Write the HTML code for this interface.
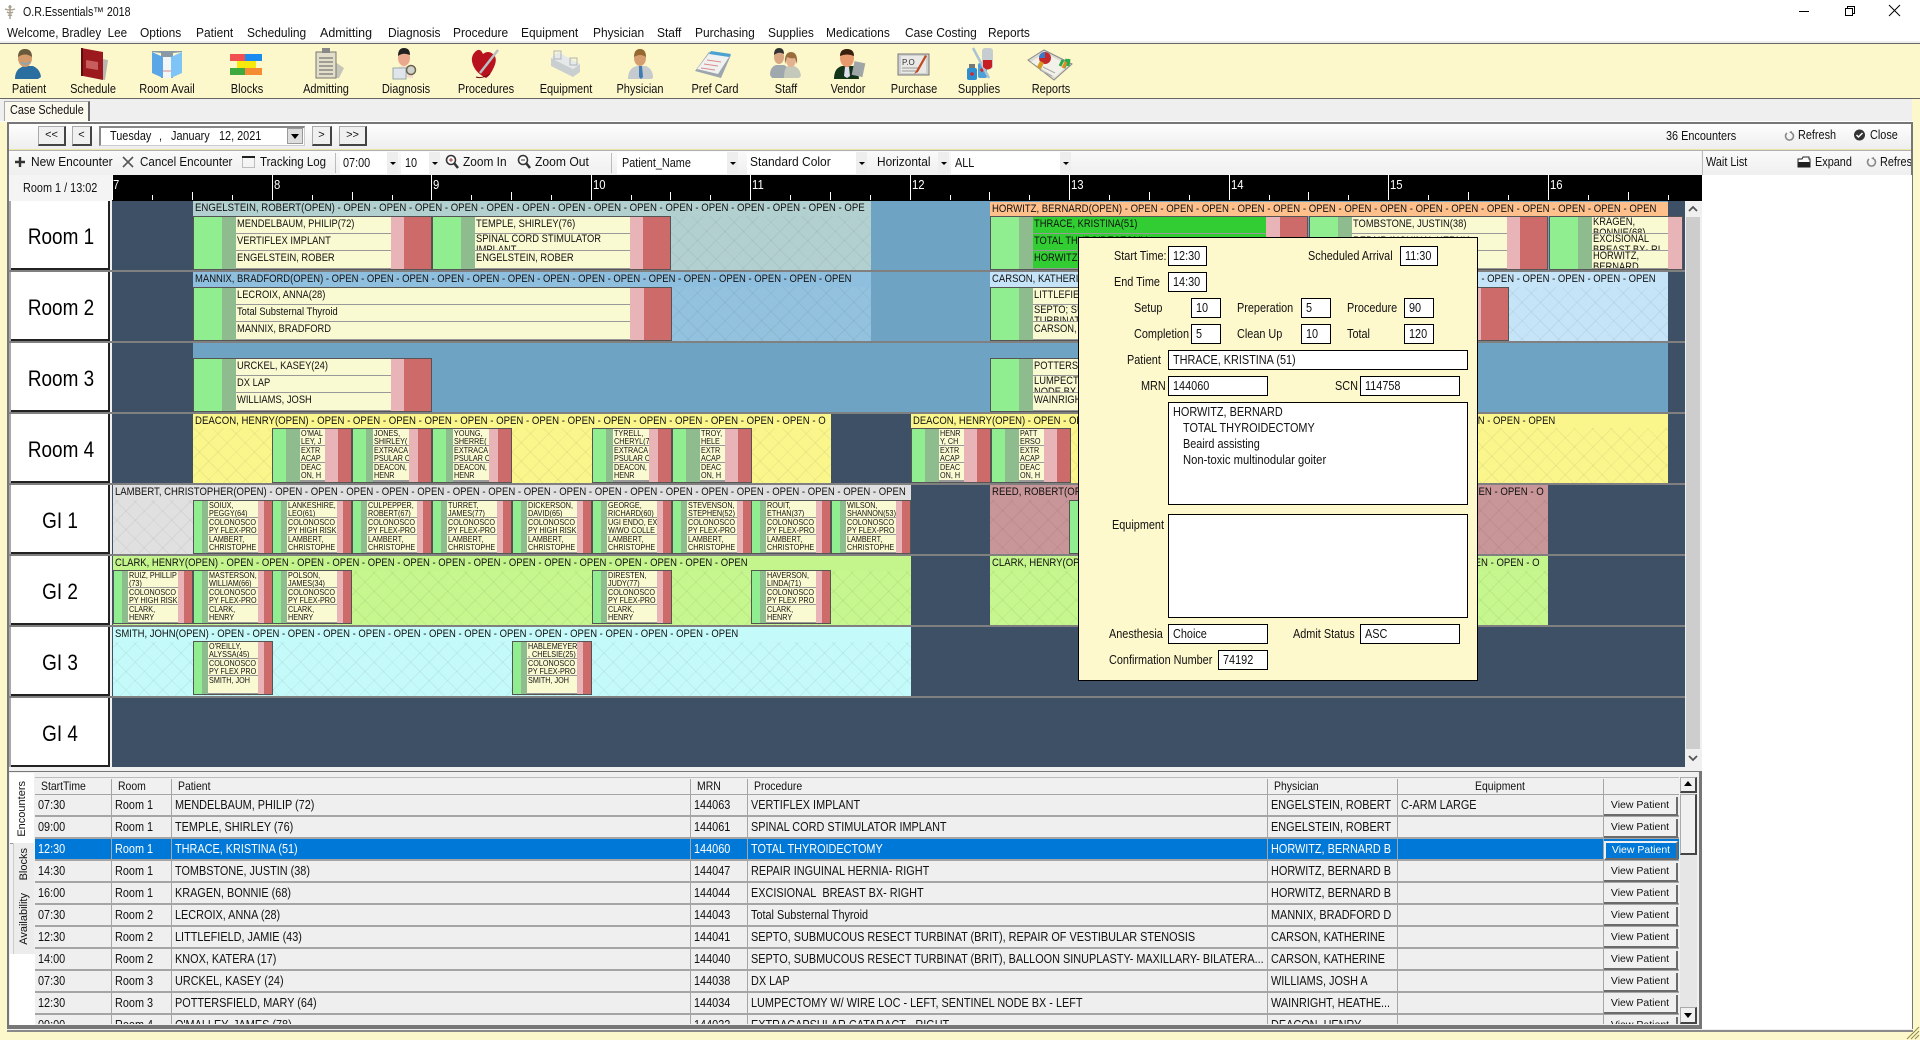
<!DOCTYPE html>
<html><head><meta charset="utf-8"><title>O.R.Essentials 2018</title>
<style>
html,body{margin:0;padding:0;width:1920px;height:1040px;overflow:hidden;background:#fdf7cc;font-family:"Liberation Sans",Arial,sans-serif;color:#111}
#w{position:relative;width:1920px;height:1040px;overflow:hidden}
#w div,#w span,svg{position:absolute}
.x{position:absolute;white-space:nowrap;transform:scaleX(.87);transform-origin:0 50%;font-size:12.5px;line-height:16px}
.m{top:25px;font-size:13px;transform:scaleX(.92)}
.lb{top:81px;transform:translateX(-50%) scaleX(.88);transform-origin:50% 50%}
.b1{background:#f0f0f0;border:1px solid #aaa;border-right:2px solid #444;border-bottom:2px solid #444;box-sizing:border-box;text-align:center;font-size:11px;line-height:17px}
.sel{background:#fff;box-sizing:border-box;height:22px;top:152px}
.ar{width:11px;background:#eee;height:22px;top:152px}
.ar:after{content:"";position:absolute;left:3px;top:10px;border:3px solid transparent;border-top:3px solid #000}
.rl{left:11px;width:97px;height:67px;background:#fff;border-right:2px solid #222;border-bottom:2px solid #222}
.rt{position:absolute;left:61px;white-space:nowrap;font-size:22px;line-height:26px;transform:translateX(-50%) scaleX(.86);transform-origin:50% 50%;color:#000}
.sp{left:8px;width:1677px;height:2px;background:#808080}
.h{height:15px;overflow:hidden}
.h .x{left:2px;top:-1px;font-size:11px;transform:scaleX(.86);line-height:16px}
.k{background-image:repeating-linear-gradient(45deg,rgba(0,0,0,.05) 0 1px,transparent 1px 13px),repeating-linear-gradient(-45deg,rgba(0,0,0,.05) 0 1px,transparent 1px 13px)}
.c{box-sizing:border-box;border:1px solid #555;height:54px;overflow:hidden}
.c p{position:absolute;margin:0;height:16px;background:#fafad2;overflow:hidden}
.c p:nth-child(1){top:0}.c p:nth-child(2){top:17px}.c p:nth-child(3){top:34px;height:17px}
.c i{position:absolute;left:1px;top:0;font-style:normal;white-space:nowrap;font-size:11px;line-height:14px;transform:scaleX(.85);transform-origin:0 0;color:#111}
.c i.t{line-height:11px}
.A{background:linear-gradient(90deg,#90ee90 28px,#8fbc8f 0 42px,#999 0 197px,#e8b4b8 0 210px,#cd6a6a 0);width:239px}
.A p{left:42px;width:155px}
.W{background:linear-gradient(90deg,#90ee90 28px,#8fbc8f 0 42px,#999 0 436px,#e8b4b8 0 450px,#cd6a6a 0);width:479px}
.W p{left:42px;width:394px}
.T{background:linear-gradient(90deg,#90ee90 28px,#8fbc8f 0 42px,#999 0 275px,#e8b4b8 0 289px,#cd6a6a 0);width:318px}
.T p{left:42px;width:233px;background:#32cd32}
.K{background:linear-gradient(90deg,#90ee90 28px,#8fbc8f 0 42px,#999 0 118px,#e8b4b8 0);width:134px}
.K p{left:42px;width:76px}
.O{background:linear-gradient(90deg,#90ee90 13px,#8fbc8f 0 27px,#999 0 52px,#e8b4b8 0 65px,#cd6a6a 0);width:80px}
.O p{left:27px;width:25px}
.J{background:linear-gradient(90deg,#90ee90 13px,#8fbc8f 0 20px,#999 0 56px,#e8b4b8 0 65px,#cd6a6a 0);width:80px}
.J p{left:20px;width:36px}
.G{background:linear-gradient(90deg,#90ee90 8px,#8fbc8f 0 14px,#999 0 64px,#e8b4b8 0 70px,#cd6a6a 0);width:80px}
.G p{left:14px;width:50px}
.O i,.J i,.G i{font-size:8.5px;line-height:8px;left:1px;top:0;transform:scaleX(.85)}
.f{background:#fff;border:1px solid #000;box-sizing:border-box;height:20px}
.f .x,.dt{left:4px;top:1px;font-size:12.5px}
.gr{left:35px;width:1644px;height:20px;border-bottom:2px solid #a5a5a5;background:#efefef}
.gr .x{top:2px}
.c1{left:3px}.c2{left:80px}.c3{left:140px}.c4{left:659px}.c5{left:716px}.c6{left:1236px}.c7{left:1366px}
.vp{left:1569px;top:2px;width:74px;height:19px;background:#f0f0f0;border-bottom:2px solid #6b6b6b;border-right:2px solid #6b6b6b;box-sizing:border-box;text-align:center;font-size:10.5px;line-height:17px;color:#111}
.on{background:#0078d7}
.on .x{color:#fff}
.on .vp{background:#0078d7;color:#fff;border:2px solid #f0f0f0;border-bottom:2px solid #6b6b6b;border-right:2px solid #6b6b6b;line-height:14px}
.vl{top:779px;width:1px;height:245px;background:#a5a5a5}
.vt{writing-mode:vertical-rl;transform:rotate(180deg);font-size:11px;white-space:nowrap;line-height:14px;text-align:center}
</style></head><body><div id="w">

<!-- title & menu -->
<div style="left:0;top:0;width:1920px;height:43px;background:#fff"></div>
<svg style="left:3px;top:4px" width="14" height="16" viewBox="0 0 14 16"><path d="M7 1v14M2 5q5 2 10 0M4 8q3 2 6 0M5 11q2 1 4 0" stroke="#a89f8c" stroke-width="1.4" fill="none"/><circle cx="7" cy="3" r="1.6" fill="#a89f8c"/></svg>
<span class="x" style="left:23px;top:4px;font-size:12.5px;transform:scaleX(.85)">O.R.Essentials™ 2018</span>
<svg style="left:1795px;top:3px" width="115" height="16" viewBox="0 0 115 16"><path d="M4 8.5h10" stroke="#000" stroke-width="1"/><path d="M50.500 5.500h7v7h-7zM52.500 5.500v-2h7v7h-2" stroke="#000" fill="none"/><path d="M94 2l11 11M105 2l-11 11" stroke="#000" fill="none"/></svg>
<span class="x m" style="left:7px;transform:scaleX(.895)">Welcome, Bradley&nbsp; Lee</span>
<span class="x m" style="left:140px">Options</span>
<span class="x m" style="left:196px">Patient</span>
<span class="x m" style="left:247px">Scheduling</span>
<span class="x m" style="left:320px;transform:scaleX(.96)">Admitting</span>
<span class="x m" style="left:388px">Diagnosis</span>
<span class="x m" style="left:453px">Procedure</span>
<span class="x m" style="left:521px">Equipment</span>
<span class="x m" style="left:593px">Physician</span>
<span class="x m" style="left:657px">Staff</span>
<span class="x m" style="left:695px">Purchasing</span>
<span class="x m" style="left:768px">Supplies</span>
<span class="x m" style="left:826px">Medications</span>
<span class="x m" style="left:905px">Case Costing</span>
<span class="x m" style="left:988px">Reports</span>

<!-- toolbar -->
<div style="left:0;top:41px;width:1920px;height:2px;background:#efefef"></div>
<div style="left:0;top:43px;width:1920px;height:56px;background:#fdf7cc;border-top:1px solid #666;border-bottom:1px solid #666;box-sizing:border-box"></div>
<svg style="left:0;top:44px" width="1100" height="40" viewBox="0 44 1100 40">
<!-- patient -->
<path d="M15 79q0-11 10-13l8 0q7 3 8 11l-3 2z" fill="#2a6f9f"/><ellipse cx="25" cy="58" rx="7" ry="9" fill="#d39a6c"/><path d="M18 57q0-8 7-8t7 8q-7-5-14 0z" fill="#6a5a3c"/><path d="M21 62q4 4 9 0" stroke="#7fa9bf" stroke-width="1.500" fill="none"/>
<!-- schedule -->
<path d="M98 58l10 2-3 20-9-2z" fill="#b8b8b0"/><path d="M81 48l22 4v28l-20-4z" fill="#9c1a1e"/><path d="M83 48l-2 0v28l2 0z" fill="#5b0d10"/><path d="M86 60l12 2v8l-12-2z" fill="#c85d5d"/>
<!-- room avail -->
<path d="M152 51h30v1l-9 1v25h-12v-25l-9-1z" fill="#8a99a6"/><path d="M152 52l11 5v21l-11-5z" fill="#5aa6e6"/><path d="M182 52l-11 5v21l11-5z" fill="#7fc4f7"/><path d="M163 57h8v21h-8z" fill="#f3f6f6"/><path d="M163 71h8" stroke="#d88" stroke-width="1"/>
<!-- blocks -->
<rect x="230" y="54" width="15" height="7" fill="#f25050"/><rect x="245" y="54" width="17" height="7" fill="#1b8bf0"/><rect x="237" y="61" width="19" height="7" fill="#f5e90e"/><rect x="230" y="68" width="15" height="7" fill="#3ea93e"/><rect x="245" y="68" width="17" height="7" fill="#f58b32"/>
<!-- admitting -->
<path d="M335 62l9 6-5 10h-5z" fill="#c5c5b8"/><rect x="316" y="52" width="20" height="26" fill="#e3decb" stroke="#77776d"/><rect x="322" y="48" width="8" height="5" fill="#888"/><path d="M319 58h14M319 62h14M319 66h14M319 70h14M319 74h14" stroke="#333" stroke-width=".8"/>
<!-- diagnosis -->
<ellipse cx="404" cy="58" rx="6" ry="8" fill="#eaa98c"/><path d="M398 56q0-8 6-8t6 7q-7-3-12 1z" fill="#222"/><path d="M396 77v-8q3-3 8-3t9 3v9z" fill="#f4ddd0"/><rect x="393" y="68" width="13" height="11" fill="#dfe5ea" stroke="#9aa"/><circle cx="411" cy="70" r="4.500" fill="#cfd3c9" stroke="#6b6350" stroke-width="1.500"/>
<!-- procedures -->
<path d="M486 78q-10-5-13-13t2-13 8 2q5-4 10 0t1 13-8 11z" fill="#b8121e"/><path d="M498 50l-18 23" stroke="#b9bfc4" stroke-width="2.500"/><path d="M476 77q6 2 14-3" stroke="#6e0a12" fill="none"/>
<!-- equipment -->
<path d="M551 58l22 11 7-5v8l-7 5-22-11z" fill="#c9ced0"/><path d="M551 58l7-6 22 12-7 5z" fill="#e6e9ea"/><path d="M554 51h7v8h-7zM570 58h7v7h-7z" fill="none" stroke="#aeb4b6"/>
<!-- physician -->
<path d="M628 79q0-11 9-13h9q7 3 7 12l-2 1z" fill="#c4cace"/><ellipse cx="640" cy="58" rx="6" ry="8" fill="#d69e6e"/><path d="M634 57q0-8 6-8t6 8q-6-4-12 0z" fill="#94682e"/><path d="M639 66h3l1 11-2 2-2-2z" fill="#3e7bb0"/>
<!-- pref card -->
<path d="M695 71l14-19 22 3-10 23z" fill="#9da6ad"/><path d="M697 69l14-18 20 3-13 20z" fill="#f0f2f2"/><path d="M711 51l20 3-2 3-20-3z" fill="#4da1d1"/><path d="M707 60l14 2M704 64l14 2M701 68l14 2" stroke="#d88" stroke-width="1"/>
<!-- staff -->
<path d="M770 75q0-8 6-10h8q5 2 5 10l-2 3h-15z" fill="#9fa8ad"/><ellipse cx="779" cy="57" rx="5" ry="7" fill="#d9a882"/><path d="M774 55q0-7 5-7t5 6q-5-3-10 1z" fill="#333"/><path d="M784 78q0-10 4-12h6q6 2 7 10l-2 2z" fill="#c5c9bb"/><ellipse cx="791" cy="60" rx="5" ry="7" fill="#e3b28f"/><path d="M785 64q-1-12 6-12t6 12l-2-6q-4 1-8-1z" fill="#9a6d3d"/>
<!-- vendor -->
<path d="M834 79q0-11 8-13h11q5 2 6 13z" fill="#123418"/><ellipse cx="847" cy="58" rx="7" ry="9" fill="#e89a6f"/><path d="M840 56q0-7 7-7t7 7q-7-3-14 0z" fill="#3a1e0e"/><path d="M845 67h4l1 9-3 2-3-2z" fill="#dde"/><rect x="853" y="62" width="11" height="14" fill="#a0a6a8" transform="rotate(12 858 69)"/>
<!-- purchase -->
<rect x="898" y="54" width="31" height="21" fill="#cfd1cf" stroke="#777"/><rect x="901" y="56" width="25" height="17" fill="#e9eae8"/><text x="902" y="65" font-size="8" font-family="Liberation Sans" fill="#333">P.O</text><path d="M902 68h16M902 71h16" stroke="#999"/><path d="M925 55l-9 16-2 3 4-2 9-16z" fill="#c24a22"/>
<!-- supplies -->
<rect x="967" y="68" width="10" height="12" rx="2" fill="#2c8fd0"/><rect x="969" y="64" width="6" height="4" fill="#777"/><rect x="978" y="63" width="9" height="15" rx="2" fill="#50a0d8"/><path d="M970 74h4M972 72v4M980 70h4M982 68v4" stroke="#d22" stroke-width="1.500"/><path d="M973 48l16 30" stroke="#a8c4d4" stroke-width="2.500"/><rect x="982" y="48" width="11" height="21" rx="3" fill="#c6cdd0"/><path d="M983 60h9v7q-4 5-9 0z" fill="#c61e24"/>
<!-- reports -->
<path d="M1028 60l16-10 28 14-18 16z" fill="#dcdcd2" stroke="#888"/><path d="M1031 62l14-9 23 12-13 12z" fill="#f2f2ea"/><circle cx="1045" cy="58" r="6" fill="#c42828"/><path d="M1045 58v-6a6 6 0 0 0-6 6z" fill="#3c78c8"/><path d="M1037 67l3-6 4 2-3 6z" fill="#d89a20"/><path d="M1060 66l3-6M1064 68l3-9M1068 66l1-7" stroke-width="3" stroke="#2aa84a" fill="none"/><path d="M1063 68l3-6" stroke="#e88a20" stroke-width="3"/><path d="M1040 70l12 6M1043 67l12 6" stroke="#aaa"/>
</svg>
<span class="x lb" style="left:29px">Patient</span>
<span class="x lb" style="left:93px">Schedule</span>
<span class="x lb" style="left:167px">Room Avail</span>
<span class="x lb" style="left:247px">Blocks</span>
<span class="x lb" style="left:326px">Admitting</span>
<span class="x lb" style="left:406px">Diagnosis</span>
<span class="x lb" style="left:486px">Procedures</span>
<span class="x lb" style="left:566px">Equipment</span>
<span class="x lb" style="left:640px">Physician</span>
<span class="x lb" style="left:715px">Pref Card</span>
<span class="x lb" style="left:786px">Staff</span>
<span class="x lb" style="left:848px">Vendor</span>
<span class="x lb" style="left:914px">Purchase</span>
<span class="x lb" style="left:979px">Supplies</span>
<span class="x lb" style="left:1051px">Reports</span>

<!-- tab strip -->
<div style="left:0;top:99px;width:1912px;height:22px;background:#efefef"></div>
<div style="left:4px;top:101px;width:86px;height:20px;background:#fbf9ee;border:1px solid #aaa;border-right:2px solid #666;border-bottom:0;box-sizing:border-box"></div>
<span class="x" style="left:10px;top:102px">Case Schedule</span>
<div style="left:0;top:121px;width:1913px;height:1px;background:#fff"></div>

<!-- main panel -->
<div style="left:7px;top:122px;width:1906px;height:910px;background:#f0f0f0;border:2px solid #777;border-bottom:1px solid #777;box-sizing:border-box"></div>
<div style="left:9px;top:124px;width:1902px;height:25px;background:linear-gradient(#fefefe,#eeeeee)"></div>
<div style="left:9px;top:149px;width:1902px;height:1px;background:#ece5a8"></div>
<div style="left:9px;top:150px;width:1902px;height:1px;background:#b0b0b0"></div>
<div style="left:9px;top:151px;width:1692px;height:24px;background:linear-gradient(#fafafa,#efefef)"></div>
<div class="b1" style="left:38px;top:126px;width:28px;height:20px">&lt;&lt;</div>
<div class="b1" style="left:72px;top:126px;width:20px;height:20px">&lt;</div>
<div style="left:99px;top:126px;width:206px;height:20px;background:#fff;border:2px solid #888;border-right:1px solid #ccc;border-bottom:1px solid #ccc;box-sizing:border-box"></div>
<span class="x" style="left:110px;top:128px">Tuesday</span><span class="x" style="left:159px;top:128px">,</span><span class="x" style="left:171px;top:128px">January</span><span class="x" style="left:219px;top:128px">12, 2021</span>
<div style="left:287px;top:128px;width:16px;height:16px;background:#ddd;border:1px solid #999;box-sizing:border-box"></div>
<div style="left:291px;top:134px;border:4px solid transparent;border-top:5px solid #000;width:0;height:0"></div>
<div class="b1" style="left:312px;top:126px;width:20px;height:20px">&gt;</div>
<div class="b1" style="left:339px;top:126px;width:28px;height:20px">&gt;&gt;</div>
<span class="x" style="left:1666px;top:128px">36 Encounters</span>
<svg style="left:1783px;top:129px" width="12" height="14" viewBox="0 0 12 14"><path d="M9 4a4 4 0 1 1-5 0" stroke="#888" stroke-width="1.600" fill="none"/><path d="M6 3l3-1v3z" fill="#888"/></svg>
<span class="x" style="left:1798px;top:127px">Refresh</span>
<svg style="left:1853px;top:128px" width="13" height="14" viewBox="0 0 13 14"><circle cx="6.500" cy="7" r="5.500" fill="#333"/><path d="M3.500 7l2 2 4-4" stroke="#fff" stroke-width="1.500" fill="none"/></svg>
<span class="x" style="left:1870px;top:127px">Close</span>

<!-- toolbar row 2 -->
<svg style="left:14px;top:155px" width="12" height="14" viewBox="0 0 12 14"><path d="M6 2v10M1 7h10" stroke="#333" stroke-width="2.400"/></svg>
<span class="x" style="left:31px;top:154px;transform:scaleX(.955)">New Encounter</span>
<svg style="left:122px;top:156px" width="12" height="12" viewBox="0 0 12 12"><path d="M1 1l10 10M11 1L1 11" stroke="#555" stroke-width="1.600"/></svg>
<span class="x" style="left:140px;top:154px;transform:scaleX(.93)">Cancel Encounter</span>
<svg style="left:241px;top:155px" width="15" height="14" viewBox="0 0 15 14"><rect x="1.500" y="1.500" width="12" height="11" fill="none" stroke="#888" stroke-dasharray="1 1"/><path d="M1 2h13" stroke="#222" stroke-width="2"/></svg>
<span class="x" style="left:260px;top:154px;transform:scaleX(.92)">Tracking Log</span>
<div style="left:335px;top:153px;width:1px;height:20px;background:#bbb"></div>
<div class="sel" style="left:340px;width:58px"></div><div class="ar" style="left:387px"></div>
<span class="x" style="left:343px;top:155px">07:00</span>
<div class="sel" style="left:401px;width:39px"></div><div class="ar" style="left:429px"></div>
<span class="x" style="left:405px;top:155px">10</span>
<svg style="left:445px;top:154px" width="14" height="15" viewBox="0 0 14 15"><circle cx="6" cy="6" r="4.500" fill="#fff" stroke="#333" stroke-width="1.600"/><path d="M9 9l4 5" stroke="#333" stroke-width="2.500"/><path d="M4 6h4M6 4v4" stroke="#a33"/></svg>
<span class="x" style="left:463px;top:154px;transform:scaleX(.95)">Zoom In</span>
<svg style="left:517px;top:154px" width="14" height="15" viewBox="0 0 14 15"><circle cx="6" cy="6" r="4.500" fill="#fff" stroke="#333" stroke-width="1.600"/><path d="M9 9l4 5" stroke="#333" stroke-width="2.500"/><path d="M4 6h4" stroke="#333"/></svg>
<span class="x" style="left:535px;top:154px;transform:scaleX(.97)">Zoom Out</span>
<div style="left:611px;top:153px;width:1px;height:20px;background:#bbb"></div>
<div class="sel" style="left:617px;width:121px"></div><div class="ar" style="left:727px"></div>
<span class="x" style="left:622px;top:155px">Patient_Name</span>
<div class="sel" style="left:747px;width:120px"></div><div class="ar" style="left:856px"></div>
<span class="x" style="left:750px;top:154px;transform:scaleX(.96)">Standard Color</span>
<div class="ar" style="left:938px"></div>
<span class="x" style="left:877px;top:154px;transform:scaleX(.95)">Horizontal</span>
<div class="sel" style="left:951px;width:120px"></div><div class="ar" style="left:1060px"></div>
<span class="x" style="left:955px;top:155px">ALL</span>

<!-- wait list -->
<div style="left:1702px;top:151px;width:209px;height:24px;background:linear-gradient(#fafafa,#efefef);border-left:1px solid #bbb;box-sizing:border-box"></div>
<div style="left:1702px;top:175px;width:210px;height:854px;background:#fff"></div>
<span class="x" style="left:1706px;top:154px">Wait List</span>
<svg style="left:1797px;top:156px" width="14" height="12" viewBox="0 0 14 12"><path d="M1 3h4l1-2h6v2h1v8H1z" fill="#fff" stroke="#222"/><path d="M1 6h12v5H1z" fill="#222"/></svg>
<span class="x" style="left:1815px;top:154px">Expand</span>
<svg style="left:1865px;top:155px" width="12" height="14" viewBox="0 0 12 14"><path d="M9 4a4 4 0 1 1-5 0" stroke="#888" stroke-width="1.600" fill="none"/><path d="M6 3l3-1v3z" fill="#888"/></svg>
<div style="left:1880px;top:154px;width:31px;height:16px;overflow:hidden"><span class="x" style="left:0;top:0">Refresh</span></div>

<!-- ruler -->
<div style="left:9px;top:175px;width:103px;height:26px;background:#f4f4f4"></div>
<span class="x" style="left:23px;top:180px">Room 1 / 13:02</span>
<div style="left:112px;top:175px;width:1590px;height:26px;background:#000"></div>
<svg style="left:112px;top:175px" width="1590" height="26" viewBox="112 175 1590 26">
<path stroke="#fff" stroke-width="1" fill="none" d="M112.500 175v25M152.500 195v5M192.500 192v8M232.500 195v5M272.500 175v25M312.500 195v5M352.500 192v8M392.500 195v5M431.500 175v25M471.500 195v5M511.500 192v8M551.500 195v5M591.500 175v25M631.500 195v5M670.500 192v8M710.500 195v5M750.500 175v25M790.500 195v5M830.500 192v8M870.500 195v5M910.500 175v25M950.500 195v5M989.500 192v8M1029.500 195v5M1069.500 175v25M1109.500 195v5M1149.500 192v8M1189.500 195v5M1229.500 175v25M1269.500 195v5M1308.500 192v8M1348.500 195v5M1388.500 175v25M1428.500 195v5M1468.500 192v8M1508.500 195v5M1548.500 175v25M1588.500 195v5M1628.500 192v8M1668.500 195v5"/>
</svg>
<span class="x" style="left:113px;top:177px;color:#fff;font-size:13px">7</span>
<span class="x" style="left:274px;top:177px;color:#fff;font-size:13px">8</span>
<span class="x" style="left:433px;top:177px;color:#fff;font-size:13px">9</span>
<span class="x" style="left:593px;top:177px;color:#fff;font-size:13px">10</span>
<span class="x" style="left:752px;top:177px;color:#fff;font-size:13px">11</span>
<span class="x" style="left:912px;top:177px;color:#fff;font-size:13px">12</span>
<span class="x" style="left:1071px;top:177px;color:#fff;font-size:13px">13</span>
<span class="x" style="left:1231px;top:177px;color:#fff;font-size:13px">14</span>
<span class="x" style="left:1390px;top:177px;color:#fff;font-size:13px">15</span>
<span class="x" style="left:1550px;top:177px;color:#fff;font-size:13px">16</span>

<!-- grid background -->
<div style="left:112px;top:201px;width:1573px;height:566px;background:#3d5066"></div>
<div style="left:9px;top:201px;width:2px;height:566px;background:#a8a8a8"></div>

<!-- room 1 -->
<div style="left:193px;top:201px;width:1475px;height:69px;background:#6fa3c3"></div>
<div class="h" style="left:193px;top:201px;width:678px;background:#b3d0d0"><span class="x" style="transform:scaleX(.874)">ENGELSTEIN, ROBERT(OPEN) - OPEN - OPEN - OPEN - OPEN - OPEN - OPEN - OPEN - OPEN - OPEN - OPEN - OPEN - OPEN - OPEN - OPEN - OPE</span></div>
<div class="k" style="left:193px;top:216px;width:678px;height:54px;background-color:#b3d0d0"></div>
<div class="c A" style="left:193px;top:216px"><p><i>MENDELBAUM, PHILIP(72)</i></p><p><i>VERTIFLEX IMPLANT</i></p><p><i>ENGELSTEIN, ROBER</i></p></div>
<div class="c A" style="left:432px;top:216px"><p><i>TEMPLE, SHIRLEY(76)</i></p><p><i class="t">SPINAL CORD STIMULATOR<br>IMPLANT</i></p><p><i>ENGELSTEIN, ROBER</i></p></div>
<div class="h" style="left:990px;top:202px;width:678px;height:14px;background:#ffc08c"><span class="x" style="transform:scaleX(.87)">HORWITZ, BERNARD(OPEN) - OPEN - OPEN - OPEN - OPEN - OPEN - OPEN - OPEN - OPEN - OPEN - OPEN - OPEN - OPEN - OPEN - OPEN - OPEN</span></div>
<div class="c T" style="left:990px;top:216px"><p><i>THRACE, KRISTINA(51)</i></p><p><i>TOTAL THYROIDECTOMY</i></p><p><i>HORWITZ, BERNARD</i></p></div>
<div class="c A" style="left:1309px;top:216px"><p><i>TOMBSTONE, JUSTIN(38)</i></p><p><i>REPAIR INGUINAL HERNIA</i></p><p><i>HORWITZ, BERNARD</i></p></div>
<div class="c K" style="left:1549px;top:216px"><p><i class="t">KRAGEN,<br>BONNIE(68)</i></p><p><i class="t">EXCISIONAL<br>BREAST BX- RI</i></p><p><i class="t">HORWITZ,<br>BERNARD</i></p></div>

<!-- room 2 -->
<div style="left:193px;top:272px;width:1475px;height:69px;background:#6fa3c3"></div>
<div class="h" style="left:193px;top:272px;width:678px;background:#8fbfdf"><span class="x">MANNIX, BRADFORD(OPEN) - OPEN - OPEN - OPEN - OPEN - OPEN - OPEN - OPEN - OPEN - OPEN - OPEN - OPEN - OPEN - OPEN - OPEN - OPEN</span></div>
<div class="k" style="left:193px;top:287px;width:678px;height:54px;background-color:#93c2de"></div>
<div class="c W" style="left:193px;top:287px"><p><i>LECROIX, ANNA(28)</i></p><p><i>Total Substernal Thyroid</i></p><p><i>MANNIX, BRADFORD</i></p></div>
<div class="h" style="left:990px;top:272px;width:678px;background:#c5e4f8"><span class="x" style="transform:scaleX(.864)">CARSON, KATHERINE(OPEN) - OPEN - OPEN - OPEN - OPEN - OPEN - OPEN - OPEN - OPEN - OPEN - OPEN - OPEN - OPEN - OPEN - OPEN - OPEN</span></div>
<div class="k" style="left:990px;top:287px;width:678px;height:54px;background-color:#c5e4f8"></div>
<div class="c A" style="left:990px;top:287px"><p><i>LITTLEFIELD, JAMIE(43)</i></p><p><i class="t">SEPTO; SUBMUCOUS<br>TURBINATE</i></p><p><i>CARSON, KATHERINE</i></p></div>
<div class="c W" style="left:1230px;top:287px;width:279px;background:linear-gradient(90deg,#90ee90 28px,#8fbc8f 0 42px,#fafad2 0 236px,#e8b4b8 0 250px,#cd6a6a 0)"></div>

<!-- room 3 -->
<div style="left:193px;top:343px;width:1475px;height:69px;background:#6fa3c3"></div>
<div class="c A" style="left:193px;top:358px"><p><i>URCKEL, KASEY(24)</i></p><p><i>DX LAP</i></p><p><i>WILLIAMS, JOSH</i></p></div>
<div class="c A" style="left:990px;top:358px"><p><i>POTTERSFIELD, MARY(64)</i></p><p><i class="t">LUMPECTOMY W/<br>NODE BX</i></p><p><i>WAINRIGHT, HEATHER</i></p></div>

<!-- room 4 -->
<div class="h" style="left:193px;top:414px;width:638px;background:#faf68c"><span class="x" style="transform:scaleX(.874)">DEACON, HENRY(OPEN) - OPEN - OPEN - OPEN - OPEN - OPEN - OPEN - OPEN - OPEN - OPEN - OPEN - OPEN - OPEN - OPEN - OPEN - O</span></div>
<div class="k" style="left:193px;top:428px;width:638px;height:55px;background-color:#faf68c"></div>
<div class="c O" style="left:272px;top:428px;height:55px"><p><i>O'MAL<br>LEY, J</i></p><p><i>EXTR<br>ACAP</i></p><p><i>DEAC<br>ON, H</i></p></div>
<div class="c J" style="left:352px;top:428px;height:55px"><p><i>JONES,<br>SHIRLEY(</i></p><p><i>EXTRACA<br>PSULAR C</i></p><p><i>DEACON,<br>HENR</i></p></div>
<div class="c J" style="left:432px;top:428px;height:55px"><p><i>YOUNG,<br>SHERRE(</i></p><p><i>EXTRACA<br>PSULAR C</i></p><p><i>DEACON,<br>HENR</i></p></div>
<div class="c J" style="left:592px;top:428px;height:55px"><p><i>TYRELL,<br>CHERYL(7</i></p><p><i>EXTRACA<br>PSULAR C</i></p><p><i>DEACON,<br>HENR</i></p></div>
<div class="c O" style="left:672px;top:428px;height:55px"><p><i>TROY,<br>HELE</i></p><p><i>EXTR<br>ACAP</i></p><p><i>DEAC<br>ON, H</i></p></div>
<div class="h" style="left:911px;top:414px;width:757px;background:#faf68c"><span class="x" style="transform:scaleX(.863)">DEACON, HENRY(OPEN) - OPEN - OPEN - OPEN - OPEN - OPEN - OPEN - OPEN - OPEN - OPEN - OPEN - OPEN - OPEN - OPEN - OPEN - OPEN</span></div>
<div class="k" style="left:911px;top:428px;width:757px;height:55px;background-color:#faf68c"></div>
<div class="c O" style="left:911px;top:428px;height:55px"><p><i>HENR<br>Y, CH</i></p><p><i>EXTR<br>ACAP</i></p><p><i>DEAC<br>ON, H</i></p></div>
<div class="c O" style="left:991px;top:428px;height:55px"><p><i>PATT<br>ERSO</i></p><p><i>EXTR<br>ACAP</i></p><p><i>DEAC<br>ON, H</i></p></div>

<!-- GI 1 -->
<div class="h" style="left:113px;top:485px;width:798px;background:#e0e0e0"><span class="x" style="transform:scaleX(.867)">LAMBERT, CHRISTOPHER(OPEN) - OPEN - OPEN - OPEN - OPEN - OPEN - OPEN - OPEN - OPEN - OPEN - OPEN - OPEN - OPEN - OPEN - OPEN - OPEN - OPEN - OPEN - OPEN</span></div>
<div class="k" style="left:113px;top:500px;width:798px;height:54px;background-color:#e0e0e0"></div>
<div class="c G" style="left:193px;top:500px"><p><i>SOIUX,<br>PEGGY(64)</i></p><p><i>COLONOSCO<br>PY FLEX-PRO</i></p><p><i>LAMBERT,<br>CHRISTOPHE</i></p></div>
<div class="c G" style="left:272px;top:500px"><p><i>LANKESHIRE,<br>LEO(61)</i></p><p><i>COLONOSCO<br>PY HIGH RISK</i></p><p><i>LAMBERT,<br>CHRISTOPHE</i></p></div>
<div class="c G" style="left:352px;top:500px"><p><i>CULPEPPER,<br>ROBERT(67)</i></p><p><i>COLONOSCO<br>PY FLEX-PRO</i></p><p><i>LAMBERT,<br>CHRISTOPHE</i></p></div>
<div class="c G" style="left:432px;top:500px"><p><i>TURRET,<br>JAMES(77)</i></p><p><i>COLONOSCO<br>PY FLEX-PRO</i></p><p><i>LAMBERT,<br>CHRISTOPHE</i></p></div>
<div class="c G" style="left:512px;top:500px"><p><i>DICKERSON,<br>DAVID(65)</i></p><p><i>COLONOSCO<br>PY HIGH RISK</i></p><p><i>LAMBERT,<br>CHRISTOPHE</i></p></div>
<div class="c G" style="left:592px;top:500px"><p><i>GEORGE,<br>RICHARD(60)</i></p><p><i>UGI ENDO, EX<br>W/WO COLLE</i></p><p><i>LAMBERT,<br>CHRISTOPHE</i></p></div>
<div class="c G" style="left:672px;top:500px"><p><i>STEVENSON,<br>STEPHEN(52)</i></p><p><i>COLONOSCO<br>PY FLEX-PRO</i></p><p><i>LAMBERT,<br>CHRISTOPHE</i></p></div>
<div class="c G" style="left:751px;top:500px"><p><i>ROUIT,<br>ETHAN(37)</i></p><p><i>COLONOSCO<br>PY FLEX-PRO</i></p><p><i>LAMBERT,<br>CHRISTOPHE</i></p></div>
<div class="c G" style="left:831px;top:500px"><p><i>WILSON,<br>SHANNON(53)</i></p><p><i>COLONOSCO<br>PY FLEX-PRO</i></p><p><i>LAMBERT,<br>CHRISTOPHE</i></p></div>
<div class="h" style="left:990px;top:485px;width:558px;background:#c89598"><span class="x" style="transform:scaleX(.875)">REED, ROBERT(OPEN) - OPEN - OPEN - OPEN - OPEN - OPEN - OPEN - OPEN - OPEN - OPEN - OPEN - OPEN - OPEN - O</span></div>
<div class="k" style="left:990px;top:500px;width:558px;height:54px;background-color:#c89598"></div>
<div class="c G" style="left:1069px;top:500px"></div>

<!-- GI 2 -->
<div class="h" style="left:113px;top:556px;width:798px;background:#c4f48c"><span class="x" style="transform:scaleX(.862)">CLARK, HENRY(OPEN) - OPEN - OPEN - OPEN - OPEN - OPEN - OPEN - OPEN - OPEN - OPEN - OPEN - OPEN - OPEN - OPEN - OPEN - OPEN</span></div>
<div class="k" style="left:113px;top:571px;width:798px;height:54px;background-color:#c6f68e"></div>
<div class="c G" style="left:113px;top:570px"><p><i>RUIZ, PHILLIP<br>(73)</i></p><p><i>COLONOSCO<br>PY HIGH RISK</i></p><p><i>CLARK,<br>HENRY</i></p></div>
<div class="c G" style="left:193px;top:570px"><p><i>MASTERSON,<br>WILLIAM(66)</i></p><p><i>COLONOSCO<br>PY FLEX-PRO</i></p><p><i>CLARK,<br>HENRY</i></p></div>
<div class="c G" style="left:272px;top:570px"><p><i>POLSON,<br>JAMES(34)</i></p><p><i>COLONOSCO<br>PY FLEX-PRO</i></p><p><i>CLARK,<br>HENRY</i></p></div>
<div class="c G" style="left:592px;top:570px"><p><i>DIRESTEN,<br>JUDY(77)</i></p><p><i>COLONOSCO<br>PY FLEX-PRO</i></p><p><i>CLARK,<br>HENRY</i></p></div>
<div class="c G" style="left:751px;top:570px"><p><i>HAVERSON,<br>LINDA(71)</i></p><p><i>COLONOSCO<br>PY FLEX PRO</i></p><p><i>CLARK,<br>HENRY</i></p></div>
<div class="h" style="left:990px;top:556px;width:558px;background:#c4f48c"><span class="x" style="transform:scaleX(.87)">CLARK, HENRY(OPEN) - OPEN - OPEN - OPEN - OPEN - OPEN - OPEN - OPEN - OPEN - OPEN - OPEN - OPEN - OPEN - O</span></div>
<div class="k" style="left:990px;top:571px;width:558px;height:54px;background-color:#c6f68e"></div>

<!-- GI 3 -->
<div class="h" style="left:113px;top:627px;width:798px;background:#c5fafa"><span class="x" style="transform:scaleX(.862)">SMITH, JOHN(OPEN) - OPEN - OPEN - OPEN - OPEN - OPEN - OPEN - OPEN - OPEN - OPEN - OPEN - OPEN - OPEN - OPEN - OPEN - OPEN</span></div>
<div class="k" style="left:113px;top:642px;width:798px;height:54px;background-color:#c5fafa"></div>
<div class="c G" style="left:193px;top:641px"><p><i>O'REILLY,<br>ALYSSA(45)</i></p><p><i>COLONOSCO<br>PY FLEX PRO</i></p><p><i>SMITH, JOH</i></p></div>
<div class="c G" style="left:512px;top:641px"><p><i>HABLEMEYER<br>, CHELSIE(25)</i></p><p><i>COLONOSCO<br>PY FLEX-PRO</i></p><p><i>SMITH, JOH</i></p></div>

<!-- row labels & separators -->
<div class="rl" style="top:201px"></div><div class="rl" style="top:272px"></div><div class="rl" style="top:343px"></div><div class="rl" style="top:414px"></div><div class="rl" style="top:485px"></div><div class="rl" style="top:556px"></div><div class="rl" style="top:627px"></div><div class="rl" style="top:698px"></div>
<span class="rt" style="top:224px">Room 1</span><span class="rt" style="top:295px">Room 2</span><span class="rt" style="top:366px">Room 3</span><span class="rt" style="top:437px">Room 4</span>
<span class="rt" style="top:508px;left:60px">GI 1</span><span class="rt" style="top:579px;left:60px">GI 2</span><span class="rt" style="top:650px;left:60px">GI 3</span><span class="rt" style="top:721px;left:60px">GI 4</span>
<div class="sp" style="top:270px"></div><div class="sp" style="top:341px"></div><div class="sp" style="top:412px"></div><div class="sp" style="top:483px"></div><div class="sp" style="top:554px"></div><div class="sp" style="top:625px"></div><div class="sp" style="top:696px"></div>

<!-- schedule scrollbar -->
<div style="left:1686px;top:201px;width:14px;height:566px;background:#cdcdcd"></div>
<div style="left:1686px;top:201px;width:14px;height:16px;background:#f0f0f0"></div>
<div style="left:1686px;top:749px;width:14px;height:18px;background:#f0f0f0"></div>
<svg style="left:1686px;top:203px" width="14" height="12" viewBox="0 0 14 12"><path d="M3 8l4-4 4 4" stroke="#555" stroke-width="1.800" fill="none"/></svg>
<svg style="left:1686px;top:752px" width="14" height="12" viewBox="0 0 14 12"><path d="M3 4l4 4 4-4" stroke="#555" stroke-width="1.800" fill="none"/></svg>

<!-- dialog -->
<div style="left:1078px;top:237px;width:400px;height:444px;background:#fef8cd;border:1px solid #000;box-sizing:border-box"></div>
<span class="x" style="left:1114px;top:248px">Start Time:</span>
<div class="f" style="left:1168px;top:246px;width:39px"><span class="x">12:30</span></div>
<span class="x" style="left:1308px;top:248px">Scheduled Arrival</span>
<div class="f" style="left:1400px;top:246px;width:38px"><span class="x">11:30</span></div>
<span class="x" style="left:1114px;top:274px">End Time</span>
<div class="f" style="left:1168px;top:272px;width:39px"><span class="x">14:30</span></div>
<span class="x" style="left:1134px;top:300px">Setup</span>
<div class="f" style="left:1191px;top:298px;width:30px"><span class="x">10</span></div>
<span class="x" style="left:1237px;top:300px">Preperation</span>
<div class="f" style="left:1301px;top:298px;width:30px"><span class="x">5</span></div>
<span class="x" style="left:1347px;top:300px">Procedure</span>
<div class="f" style="left:1404px;top:298px;width:30px"><span class="x">90</span></div>
<span class="x" style="left:1134px;top:326px">Completion</span>
<div class="f" style="left:1191px;top:324px;width:30px"><span class="x">5</span></div>
<span class="x" style="left:1237px;top:326px">Clean Up</span>
<div class="f" style="left:1301px;top:324px;width:30px"><span class="x">10</span></div>
<span class="x" style="left:1347px;top:326px">Total</span>
<div class="f" style="left:1404px;top:324px;width:30px"><span class="x">120</span></div>
<span class="x" style="left:1127px;top:352px">Patient</span>
<div class="f" style="left:1168px;top:350px;width:300px"><span class="x">THRACE, KRISTINA (51)</span></div>
<span class="x" style="left:1141px;top:378px">MRN</span>
<div class="f" style="left:1168px;top:376px;width:100px"><span class="x">144060</span></div>
<span class="x" style="left:1335px;top:378px">SCN</span>
<div class="f" style="left:1360px;top:376px;width:100px"><span class="x">114758</span></div>
<div class="f" style="left:1168px;top:402px;width:300px;height:103px">
<span class="x" style="left:4px;top:1px">HORWITZ, BERNARD</span>
<span class="x" style="left:14px;top:17px">TOTAL THYROIDECTOMY</span>
<span class="x" style="left:14px;top:33px">Beaird assisting</span>
<span class="x" style="left:14px;top:49px;transform:scaleX(.9)">Non-toxic multinodular goiter</span></div>
<span class="x" style="left:1112px;top:517px">Equipment</span>
<div class="f" style="left:1168px;top:514px;width:300px;height:104px"></div>
<span class="x" style="left:1109px;top:626px">Anesthesia</span>
<div class="f" style="left:1168px;top:624px;width:100px"><span class="x">Choice</span></div>
<span class="x" style="left:1293px;top:626px">Admit Status</span>
<div class="f" style="left:1360px;top:624px;width:100px"><span class="x">ASC</span></div>
<span class="x" style="left:1109px;top:652px">Confirmation Number</span>
<div class="f" style="left:1218px;top:650px;width:50px"><span class="x">74192</span></div>

<!-- lower panel -->
<div style="left:9px;top:767px;width:1693px;height:4px;background:#f0f0f0"></div>
<div style="left:8px;top:771px;width:1694px;height:258px;background:#f0f0f0;border:1px solid #777;border-right:3px solid #777;border-bottom:3px solid #777;box-sizing:border-box"></div>
<div style="left:10px;top:773px;width:24px;height:70px;background:#fff;border-bottom:1px solid #999"></div>
<div style="left:13px;top:843px;width:20px;height:45px;background:#ececec;border-left:1px solid #ccc;border-bottom:1px solid #777"></div>
<div style="left:13px;top:888px;width:20px;height:66px;background:#ececec;border-left:1px solid #ccc;border-bottom:1px solid #777"></div>
<div style="left:10px;top:954px;width:25px;height:73px;background:#fff"></div>
<span class="vt" style="position:absolute;left:15px;top:781px">Encounters</span>
<span class="vt" style="position:absolute;left:17px;top:848px">Blocks</span>
<span class="vt" style="position:absolute;left:17px;top:893px">Availability</span>

<!-- grid header -->
<div style="left:35px;top:777px;width:1644px;height:16px;background:#f0f0f0;border-top:1px solid #bbb;border-bottom:1px solid #a5a5a5;box-sizing:content-box"></div>
<span class="x" style="left:41px;top:778px;font-size:12px">StartTime</span>
<span class="x" style="left:118px;top:778px;font-size:12px">Room</span>
<span class="x" style="left:178px;top:778px;font-size:12px">Patient</span>
<span class="x" style="left:697px;top:778px;font-size:12px">MRN</span>
<span class="x" style="left:754px;top:778px;font-size:12px">Procedure</span>
<span class="x" style="left:1274px;top:778px;font-size:12px">Physician</span>
<span class="x" style="left:1475px;top:778px;font-size:12px">Equipment</span>

<!-- grid rows -->
<div style="left:35px;top:795px;width:1644px;height:229px;overflow:hidden">
<div class="gr" style="left:0;top:0"><span class="x c1">07:30</span><span class="x c2">Room 1</span><span class="x c3">MENDELBAUM, PHILIP (72)</span><span class="x c4">144063</span><span class="x c5">VERTIFLEX IMPLANT</span><span class="x c6">ENGELSTEIN, ROBERT</span><span class="x c7">C-ARM LARGE</span><div class="vp">View Patient</div></div>
<div class="gr" style="left:0;top:22px"><span class="x c1">09:00</span><span class="x c2">Room 1</span><span class="x c3">TEMPLE, SHIRLEY (76)</span><span class="x c4">144061</span><span class="x c5">SPINAL CORD STIMULATOR IMPLANT</span><span class="x c6">ENGELSTEIN, ROBERT</span><div class="vp">View Patient</div></div>
<div class="gr on" style="left:0;top:44px"><span class="x c1">12:30</span><span class="x c2">Room 1</span><span class="x c3">THRACE, KRISTINA (51)</span><span class="x c4">144060</span><span class="x c5">TOTAL THYROIDECTOMY</span><span class="x c6">HORWITZ, BERNARD B</span><div class="vp">View Patient</div></div>
<div class="gr" style="left:0;top:66px"><span class="x c1">14:30</span><span class="x c2">Room 1</span><span class="x c3">TOMBSTONE, JUSTIN (38)</span><span class="x c4">144047</span><span class="x c5">REPAIR INGUINAL HERNIA- RIGHT</span><span class="x c6">HORWITZ, BERNARD B</span><div class="vp">View Patient</div></div>
<div class="gr" style="left:0;top:88px"><span class="x c1">16:00</span><span class="x c2">Room 1</span><span class="x c3">KRAGEN, BONNIE (68)</span><span class="x c4">144044</span><span class="x c5">EXCISIONAL&nbsp; BREAST BX- RIGHT</span><span class="x c6">HORWITZ, BERNARD B</span><div class="vp">View Patient</div></div>
<div class="gr" style="left:0;top:110px"><span class="x c1">07:30</span><span class="x c2">Room 2</span><span class="x c3">LECROIX, ANNA (28)</span><span class="x c4">144043</span><span class="x c5">Total Substernal Thyroid</span><span class="x c6">MANNIX, BRADFORD D</span><div class="vp">View Patient</div></div>
<div class="gr" style="left:0;top:132px"><span class="x c1">12:30</span><span class="x c2">Room 2</span><span class="x c3">LITTLEFIELD, JAMIE (43)</span><span class="x c4">144041</span><span class="x c5">SEPTO, SUBMUCOUS RESECT TURBINAT (BRIT), REPAIR OF VESTIBULAR STENOSIS</span><span class="x c6">CARSON, KATHERINE</span><div class="vp">View Patient</div></div>
<div class="gr" style="left:0;top:154px"><span class="x c1">14:00</span><span class="x c2">Room 2</span><span class="x c3">KNOX, KATERA (17)</span><span class="x c4">144040</span><span class="x c5">SEPTO, SUBMUCOUS RESECT TURBINAT (BRIT), BALLOON SINUPLASTY- MAXILLARY- BILATERA...</span><span class="x c6">CARSON, KATHERINE</span><div class="vp">View Patient</div></div>
<div class="gr" style="left:0;top:176px"><span class="x c1">07:30</span><span class="x c2">Room 3</span><span class="x c3">URCKEL, KASEY (24)</span><span class="x c4">144038</span><span class="x c5">DX LAP</span><span class="x c6">WILLIAMS, JOSH A</span><div class="vp">View Patient</div></div>
<div class="gr" style="left:0;top:198px"><span class="x c1">12:30</span><span class="x c2">Room 3</span><span class="x c3">POTTERSFIELD, MARY (64)</span><span class="x c4">144034</span><span class="x c5">LUMPECTOMY W/ WIRE LOC - LEFT, SENTINEL NODE BX - LEFT</span><span class="x c6">WAINRIGHT, HEATHE...</span><div class="vp">View Patient</div></div>
<div class="gr" style="left:0;top:220px"><span class="x c1">09:00</span><span class="x c2">Room 4</span><span class="x c3">O'MALLEY, JAMES (78)</span><span class="x c4">144032</span><span class="x c5">EXTRACAPSULAR CATARACT - RIGHT</span><span class="x c6">DEACON, HENRY</span><div class="vp">View Patient</div></div>
</div>
<div class="vl" style="left:111px"></div><div class="vl" style="left:171px"></div><div class="vl" style="left:690px"></div><div class="vl" style="left:747px"></div><div class="vl" style="left:1267px"></div><div class="vl" style="left:1397px"></div><div class="vl" style="left:1603px"></div>

<!-- grid scrollbar -->
<div style="left:1680px;top:777px;width:17px;height:247px;background:#e6e6e6"></div>
<div class="b1" style="left:1680px;top:777px;width:17px;height:16px"></div>
<div style="left:1684px;top:781px;width:0;height:0;border:4px solid transparent;border-bottom:5px solid #000;border-top:0"></div>
<div class="b1" style="left:1680px;top:794px;width:17px;height:61px"></div>
<div class="b1" style="left:1680px;top:1007px;width:17px;height:17px"></div>
<div style="left:1684px;top:1013px;width:0;height:0;border:4px solid transparent;border-top:5px solid #000;border-bottom:0"></div>

<!-- bottom -->
<div style="left:9px;top:1025px;width:1693px;height:3px;background:#777"></div>
<div style="left:7px;top:1029px;width:1906px;height:1px;background:#f0f0f0"></div>
<div style="left:7px;top:1030px;width:1906px;height:2px;background:#8a8a8a"></div>
<div style="left:1913px;top:122px;width:7px;height:918px;background:#fdf7cc"></div>
<svg style="left:1906px;top:1026px" width="14" height="14" viewBox="0 0 14 14"><path d="M1 13L13 1M5 13l8-8M9 13l4-4" stroke="#8c8a40" stroke-width="1"/></svg>
</div></body></html>
